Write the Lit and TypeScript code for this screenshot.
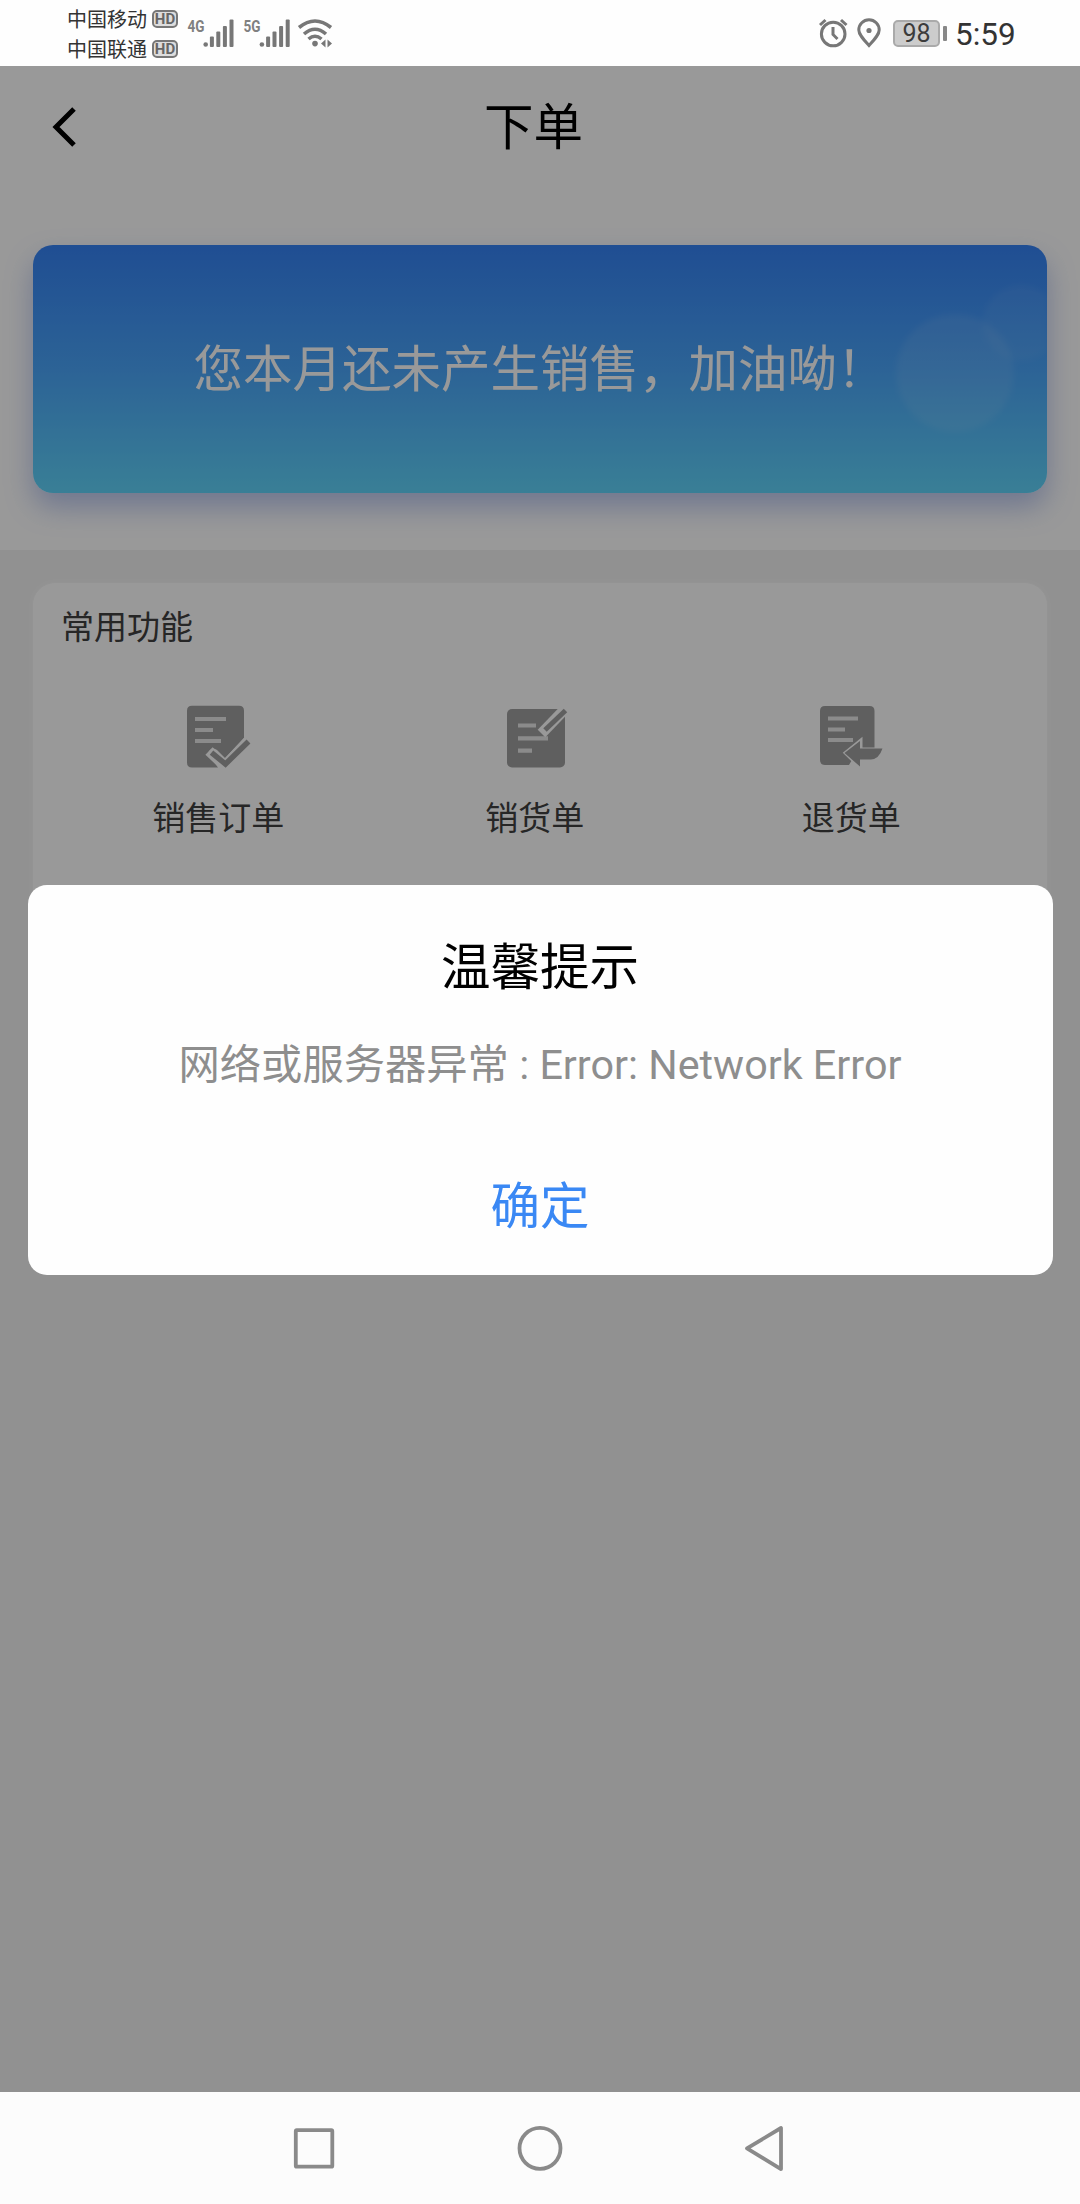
import { LitElement, html, css, svg } from "lit";
import { customElement } from "lit/decorators.js";

const signalBars = (x: number) => svg`
  <circle cx=${x} cy="44.5" r="2.3"></circle>
  <rect x=${x + 4.2} y="36.5" width="4" height="10.5" rx="1"></rect>
  <rect x=${x + 10.6} y="31.5" width="4" height="15.5" rx="1"></rect>
  <rect x=${x + 17.2} y="26" width="4" height="21" rx="1"></rect>
  <rect x=${x + 23.8} y="19.5" width="4" height="27.5" rx="1"></rect>`;

@customElement("status-bar")
class StatusBar extends LitElement {
  static styles = css`
    :host { display: block; }
    .bar {
      height: 66px; box-sizing: border-box; padding: 0 65px 0 67px;
      display: flex; justify-content: space-between; background: #fefefe;
    }
    .left, .right { display: flex; }
    .carriers { padding-top: 3px; }
    .carrier { display: flex; align-items: center; height: 30px; font-size: 20px; color: #333; gap: 5px; }
    .hd {
      box-sizing: border-box; width: 26px; height: 18px; border: 2px solid #777; border-radius: 5px;
      background: #ddd; color: #666; font: 700 15px/14px Roboto, sans-serif; text-align: center;
      margin-top: 2px;
    }
    .signal { display: block; width: 156px; height: 66px; margin-left: 8px; }
    .gen { font: 700 16px "Roboto", sans-serif; fill: #808080; }
    .right { align-items: center; }
    .glyphs { display: block; width: 66px; height: 66px; }
    .battery { display: flex; align-items: center; gap: 3px; margin-left: 9px; }
    .cell {
      box-sizing: border-box; width: 47px; height: 27px; border: 2px solid #aaa; border-radius: 5px;
      background: #ccc; color: #3c3c3c; font-size: 25px; line-height: 24px; text-align: center;
    }
    .nub { width: 4px; height: 15px; background: #888; border-radius: 1px; }
    .time { font-size: 31.5px; color: #333; margin-left: 8px; width: 60px; white-space: nowrap; line-height: 36px; padding-top: 3px; }
  `;
  render() {
    return html`<div class="bar">
      <div class="left">
        <div class="carriers">
          <div class="carrier"><span>中国移动</span><span class="hd">HD</span></div>
          <div class="carrier"><span>中国联通</span><span class="hd">HD</span></div>
        </div>
        <svg class="signal" viewBox="186 0 156 66" fill="#777">
          <text class="gen" x="187.5" y="31.5" textLength="17" lengthAdjust="spacingAndGlyphs">4G</text>
          ${signalBars(205.7)}
          <text class="gen" x="243.5" y="31.5" textLength="17" lengthAdjust="spacingAndGlyphs">5G</text>
          ${signalBars(261.9)}
          <g fill="none" stroke="#777" stroke-width="3.6">
            <path d="M299 27.5 Q315 14.5 331 27.5"></path>
            <path d="M304 34 Q315 24.5 326 34"></path>
            <path d="M308.5 39 Q315 33.5 321.5 39"></path>
          </g>
          <circle cx="315" cy="43.6" r="2.8"></circle>
          <path d="M325.500 39.500v8l-4.500-4zM327.500 39.500v8l4.500-4z"></path>
        </svg>
      </div>
      <div class="right">
        <svg class="glyphs" viewBox="818 0 66 66" fill="none" stroke="#777" stroke-width="3">
          <circle cx="833.2" cy="34" r="11.8"></circle>
          <path d="M833 27v7.500l4.500 4.500M820 25l5.500-5M846.500 25l-5.500-5"></path>
          <path d="M869 45.500C863 39 858.800 34.500 858.800 30a10.200 10.200 0 0 1 20.400 0C879.200 34.500 875 39 869 45.500z"></path>
          <circle cx="869" cy="30.500" r="2.600" fill="#777" stroke="none"></circle>
        </svg>
        <div class="battery"><div class="cell">98</div><div class="nub"></div></div>
        <div class="time">5:59</div>
      </div>
    </div>`;
  }
}

const icons = {
  order: svg`
    <path fill="#9f9f9f" d="M6 .7h47q5 0 5 5V33L39 53l-8-8q-4-3-7 0-3 3 0 6l8 11.600H6q-5 0-5-5V5.700q0-5 5-5z"></path>
    <path stroke="#e8e8e8" stroke-width="4.200" d="M9 14h31M9 25h18M9 36h26"></path>
    <path fill="none" stroke="#fff" stroke-width="10.500" d="M23 46l16 15 25-27"></path>
    <path fill="none" stroke="#9f9f9f" stroke-width="5.500" d="M25.500 47.500l14 11.500 23-22.500"></path>`,
  sale: svg`
    <rect x="1" y="4" width="58" height="58.500" rx="5" fill="#9f9f9f"></rect>
    <path stroke="#e8e8e8" stroke-width="4.200" d="M12 20.500h18M12 33.300h30M12 45.700h14"></path>
    <path fill="none" stroke="#fff" stroke-width="10.500" d="M35.500 28.500L61 2"></path>
    <path fill="none" stroke="#9f9f9f" stroke-width="5" d="M39 25L59.500 5.500"></path>`,
  refund: svg`
    <path fill="#9f9f9f" d="M6 1h44.500q5 0 5 5v37H40L30 60H6q-5 0-5-5V6q0-5 5-5z"></path>
    <path stroke="#e8e8e8" stroke-width="4.200" d="M9 13.500h30M9 24.500h17M9 35h25"></path>
    <path fill="#fff" stroke="#fff" stroke-width="5" d="M27.500 48L41 37v8H63Q60 53 52 53.500H41v7.500z"></path>
    <path fill="#9f9f9f" d="M25.500 48L41 36v7.500H63.500Q60 54 52 54.500H41v7z"></path>`,
};

@customElement("app-root")
class AppRoot extends LitElement {
  static styles = css`
    :host {
      display: flex; flex-direction: column; height: 2204px; width: 1080px; overflow: hidden;
      font-family: Roboto, "Noto Sans CJK SC", sans-serif;
    }
    .app { position: relative; flex: 1; background: #f2f2f2; }
    .top { height: 484px; background: #fff; box-sizing: border-box; overflow: hidden; }
    .header { height: 122px; display: flex; align-items: center; padding: 0 50px; }
    .back { display: block; width: 30px; height: 44px; flex: none; }
    .title { flex: 1; text-align: center; font-size: 49.5px; line-height: 60px; color: #000; padding: 2px 43px 0 0; }
    .banner {
      position: relative; overflow: hidden;
      width: 1014px; height: 248px; border-radius: 20px;
      display: flex; align-items: center; justify-content: center;
      background: linear-gradient(#3582f5, #4aa5fa 50%, #60d4fb);
      color: #fff; font-size: 49.5px; line-height: 60px; white-space: nowrap;
    }
    .lift { margin: 57px 33px 0; border-radius: 20px; box-shadow: 0 14px 28px rgba(82, 115, 215, 0.4); }
    .decor { position: absolute; right: 0; top: 0; width: 160px; height: 248px; filter: blur(3px); }
    .banner-text { position: relative; padding-top: 2px; }
    .card { margin: 33px 33px 0; height: 400px; border-radius: 22px; background: #fff; box-shadow: 0 0 6px rgba(255, 255, 255, 0.6); }
    .card-title { padding: 21px 0 0 28px; font-size: 33px; line-height: 48px; color: #404040; }
    .grid { display: grid; grid-template-columns: repeat(3, 316.5px); padding: 53px 0 0 27px; }
    .item { display: flex; flex-direction: column; align-items: center; font-size: 33px; line-height: 48px; color: #404040; gap: 24px; }
    .icon { display: block; width: 66px; height: 66px; margin-left: 2px; overflow: visible; }
    .item:nth-child(2) .icon { margin-left: 8px; }
    .mask {
      position: absolute; inset: 0; background: rgba(0, 0, 0, 0.4);
      display: flex; align-items: center; justify-content: center;
    }
    .dialog {
      width: 1025px; height: 390px; margin-top: 2px; border-radius: 19px; background: #fefefe; box-sizing: border-box;
      display: flex; flex-direction: column; align-items: center; padding-top: 53px;
    }
    .dialog-title { font-size: 49.5px; line-height: 60px; color: #000; }
    .message { font-size: 41.3px; line-height: 54px; color: #8e8e8e; margin-top: 40px; white-space: nowrap; }
    .confirm { font-size: 49.5px; line-height: 60px; color: #3a88f4; margin-top: 85px; }
    .nav { height: 112px; background: #fcfcfc; display: flex; justify-content: center; }
    .nav-icons { display: block; width: 560px; height: 112px; }
  `;

  private item(icon: unknown, label: string) {
    return html`<div class="item">
      <svg class="icon" viewBox="0 0 66 66">${icon}</svg>
      <span>${label}</span>
    </div>`;
  }

  render() {
    return html`
      <status-bar></status-bar>
      <div class="app">
        <div class="top">
          <div class="header">
            <svg class="back" viewBox="50 105 30 44"><path d="M74 109L56 127L74 145" fill="none" stroke="#000" stroke-width="5"></path></svg>
            <div class="title">下单</div>
          </div>
          <div class="lift">
            <div class="banner">
              <svg class="decor" viewBox="887 245 160 248">
                <circle cx="955" cy="373" r="59" fill="#fff" opacity="0.08"></circle>
                <circle cx="1021" cy="323" r="38" fill="#fff" opacity="0.05"></circle>
              </svg>
              <span class="banner-text">您本月还未产生销售，加油呦！</span>
            </div>
          </div>
        </div>
        <div class="card">
          <div class="card-title">常用功能</div>
          <div class="grid">
            ${this.item(icons.order, "销售订单")}
            ${this.item(icons.sale, "销货单")}
            ${this.item(icons.refund, "退货单")}
          </div>
        </div>
        <div class="mask">
          <div class="dialog">
            <div class="dialog-title">温馨提示</div>
            <div class="message">网络或服务器异常 : Error: Network Error</div>
            <div class="confirm">确定</div>
          </div>
        </div>
      </div>
      <div class="nav">
        <svg class="nav-icons" viewBox="260 2092 560 112" fill="none" stroke="#8a8a8a" stroke-width="3.800" stroke-linejoin="round">
          <rect x="295.800" y="2130.200" width="36.500" height="36.500" rx="1"></rect>
          <circle cx="540" cy="2148.300" r="20.500"></circle>
          <path d="M781 2128v41L747 2148.400z"></path>
        </svg>
      </div>`;
  }
}
